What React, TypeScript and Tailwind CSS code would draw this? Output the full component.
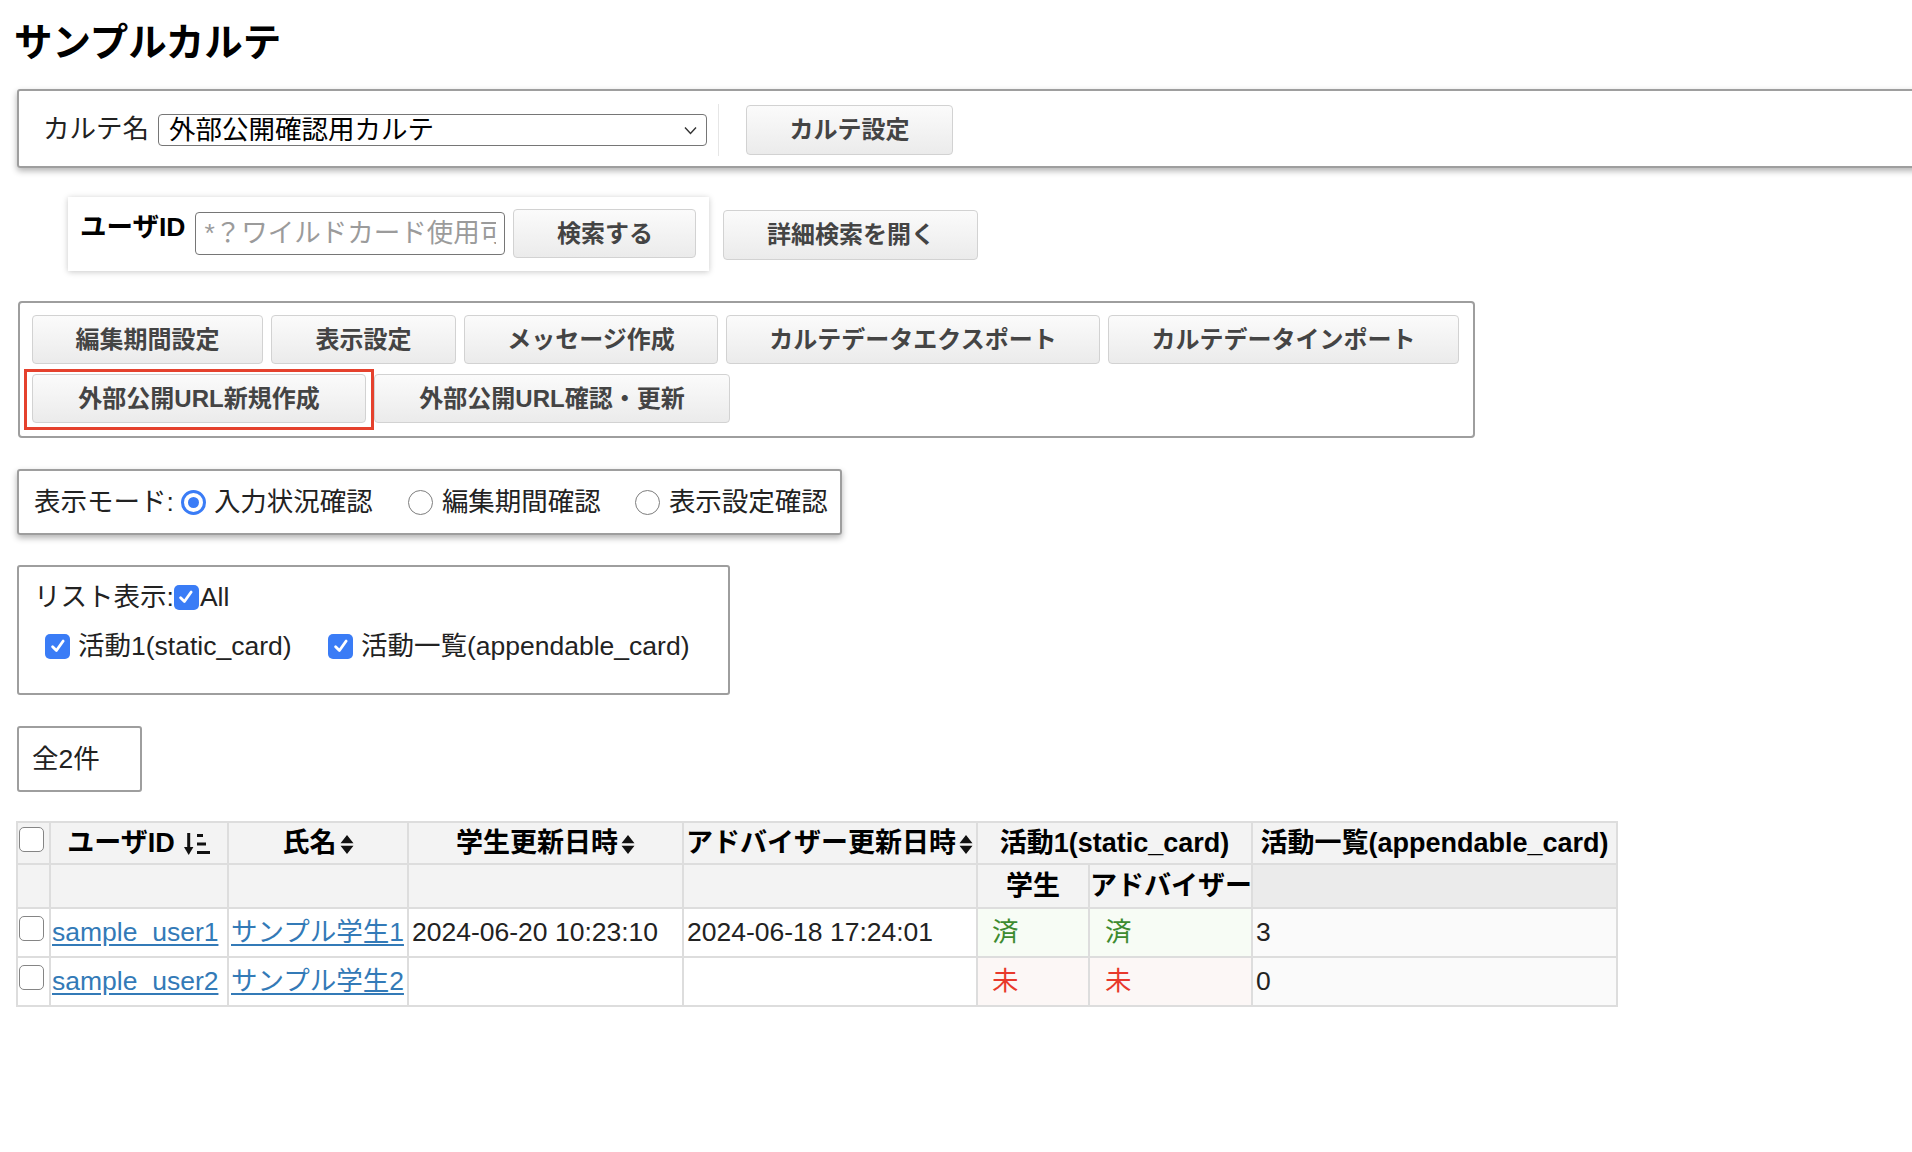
import React from 'react';

// shared border for table cells
const bd = 'border-2 border-[#dddddd]';

const Btn: React.FC<{ label: string; className?: string }> = ({ label, className = '' }) => (
  <button
    type="button"
    className={`shrink-0 rounded-[4px] border border-[#d2d2d2] bg-linear-to-b from-[#fbfbfb] to-[#ebebeb] text-[24px] font-bold leading-none whitespace-nowrap text-[#444] ${className}`}
  >
    {label}
  </button>
);

const CheckBox: React.FC<{ checked?: boolean; className?: string }> = ({ checked, className = '' }) =>
  checked ? (
    <span className={`flex h-[25px] w-[25px] shrink-0 items-center justify-center rounded-[5px] bg-[#3a7cf6] ${className}`}>
      <svg width="18" height="18" viewBox="0 0 16 16">
        <path d="M3.2 8.6 L6.6 12 L12.6 3.6" fill="none" stroke="#fff" strokeWidth="2.5" strokeLinecap="round" strokeLinejoin="round" />
      </svg>
    </span>
  ) : (
    <span className={`block h-[25px] w-[25px] shrink-0 rounded-[5px] border-[1.5px] border-[#858585] bg-white ${className}`} />
  );

const Radio: React.FC<{ checked?: boolean; className?: string }> = ({ checked, className = '' }) =>
  checked ? (
    <span className={`flex h-[25px] w-[25px] shrink-0 items-center justify-center rounded-full border-[3px] border-[#3a7cf6] bg-white ${className}`}>
      <span className="h-[11px] w-[11px] rounded-full bg-[#3a7cf6]" />
    </span>
  ) : (
    <span className={`block h-[25px] w-[25px] shrink-0 rounded-full border-[1.5px] border-[#7e7e7e] bg-white ${className}`} />
  );

// up/down sort marker
const SortBoth = () => (
  <svg width="14" height="21" viewBox="0 0 14 21" className="ml-[3px] inline-block align-[-3px]">
    <path d="M7 1 L13.5 9.3 H0.5 Z M7 20 L13.5 11.7 H0.5 Z" fill="#111" />
  </svg>
);

// sorted ascending marker
const SortAmount = () => (
  <svg width="27" height="24" viewBox="0 0 27 24" className="ml-[9px] inline-block align-[-4px]">
    <rect x="3.2" y="1" width="3" height="16" fill="#111" />
    <path d="M0 15 H9.4 L4.7 23 Z" fill="#111" />
    <rect x="13" y="2" width="6" height="3" fill="#111" />
    <rect x="13" y="10.5" width="9" height="3" fill="#111" />
    <rect x="13" y="19" width="13" height="3" fill="#111" />
  </svg>
);

export default function App() {
  return (
    <div className="min-h-screen w-full overflow-hidden bg-white pl-[17px] font-['Liberation_Sans','Noto_Sans_CJK_JP',sans-serif] text-[#222]">
      <h1 className="ml-[-3px] pt-[21px] text-[38.5px] font-bold leading-[44px] text-black">サンプルカルテ</h1>

      {/* カルテ選択 */}
      <div className="mt-[24px] flex h-[79px] w-[1920px] items-center rounded-[3px] border-2 border-[#9e9e9e] pl-[24px] pt-[2px] shadow-[0_3px_6px_rgba(0,0,0,0.3)]">
        <span className="text-[26.5px] leading-none">カルテ名</span>
        <div className="relative ml-[9px] h-[32px] w-[549px]">
          <select className="h-full w-full appearance-none rounded-[4px] border border-[#767676] bg-white pl-[10px] text-[26.5px] leading-[28px] text-black outline-none">
            <option>外部公開確認用カルテ</option>
          </select>
          <svg width="13" height="9" viewBox="0 0 13 9" className="pointer-events-none absolute right-[10px] top-[12px]">
            <path d="M1 1.5 L6.5 7.5 L12 1.5" fill="none" stroke="#333" strokeWidth="1.4" />
          </svg>
        </div>
        <div className="ml-[11px] h-[52px] w-px bg-[#e6e6e6]" />
        <Btn label="カルテ設定" className="ml-[27px] h-[50px] w-[207px]" />
      </div>

      {/* ユーザ検索 */}
      <div className="mt-[29px] flex items-start">
        <div className="ml-[51px] flex h-[74px] items-start bg-white pl-[12px] pr-[13px] pt-[12px] shadow-[0_1px_6px_rgba(0,0,0,0.22)]">
          <span className="mt-[3px] text-[26.5px] font-bold leading-[30px] text-black">ユーザID</span>
          <input
            className="ml-[10px] mt-[3px] h-[43px] w-[310px] rounded-[4px] border border-[#767676] px-[8px] text-[26.5px] outline-none placeholder:text-[#9b9b9b]"
            placeholder="*？ワイルドカード使用可能"
          />
          <Btn label="検索する" className="ml-[8px] h-[49px] w-[183px]" />
        </div>
        <Btn label="詳細検索を開く" className="ml-[14px] mt-[13px] h-[50px] w-[255px]" />
      </div>

      {/* 操作ボタン */}
      <div className="ml-[1px] mt-[30px] h-[137px] w-[1457px] rounded-[4px] border-2 border-[#9e9e9e] pl-[12px] pt-[12px]">
        <div className="flex gap-[8px]">
          <Btn label="編集期間設定" className="h-[49px] w-[231px]" />
          <Btn label="表示設定" className="h-[49px] w-[185px]" />
          <Btn label="メッセージ作成" className="h-[49px] w-[254px]" />
          <Btn label="カルテデータエクスポート" className="h-[49px] w-[374px]" />
          <Btn label="カルテデータインポート" className="h-[49px] w-[351px]" />
        </div>
        <div className="mt-[10px] flex gap-[8px]">
          <div className="relative">
            <Btn label="外部公開URL新規作成" className="h-[49px] w-[334px]" />
            <div className="pointer-events-none absolute -bottom-[7px] -left-[8px] -right-[8px] -top-[5px] border-[3px] border-[#e5412d]" />
          </div>
          <Btn label="外部公開URL確認・更新" className="h-[49px] w-[356px]" />
        </div>
      </div>

      {/* 表示モード */}
      <div className="mt-[31px] flex h-[66px] w-[825px] items-center rounded-[3px] border-2 border-[#9e9e9e] pl-[15px] text-[26.5px] leading-none shadow-[0_3px_6px_rgba(0,0,0,0.3)]">
        <span>表示モード:</span>
        <Radio checked className="ml-[7px]" />
        <span className="ml-[8px]">入力状況確認</span>
        <Radio className="ml-[35px]" />
        <span className="ml-[9px]">編集期間確認</span>
        <Radio className="ml-[34px]" />
        <span className="ml-[9px]">表示設定確認</span>
      </div>

      {/* リスト表示 */}
      <div className="mt-[30px] h-[130px] w-[713px] rounded-[3px] border-2 border-[#9e9e9e] pl-[15px] pt-[15px] text-[26.5px] leading-none">
        <div className="flex h-[30px] items-center">
          <span>リスト表示:</span>
          <CheckBox checked />
          <span className="ml-[1px]">All</span>
        </div>
        <div className="mt-[19px] flex h-[30px] items-center">
          <CheckBox checked className="ml-[11px]" />
          <span className="ml-[8px] w-[221px] whitespace-nowrap">活動1(static_card)</span>
          <CheckBox checked className="ml-[29px]" />
          <span className="ml-[8px] whitespace-nowrap">活動一覧(appendable_card)</span>
        </div>
      </div>

      {/* 件数 */}
      <div className="mt-[31px] flex h-[66px] w-[125px] items-center rounded-[3px] border-2 border-[#9e9e9e] pl-[13px] text-[26.5px] leading-none">
        全2件
      </div>

      {/* 一覧 */}
      <table className="ml-[-1px] mt-[29px] w-[1600px] table-fixed border-collapse leading-none">
        <colgroup>
          <col className="w-[33px]" />
          <col className="w-[178px]" />
          <col className="w-[180px]" />
          <col className="w-[275px]" />
          <col className="w-[294px]" />
          <col className="w-[112px]" />
          <col className="w-[163px]" />
          <col className="w-[365px]" />
        </colgroup>
        <thead>
          <tr className="h-[42px] bg-[#f3f3f3] text-[27px] font-bold text-black">
            <th className={`${bd} pl-[1px] pt-[4px] align-top`}>
              <CheckBox />
            </th>
            <th className={`${bd} whitespace-nowrap`}>
              ユーザID
              <SortAmount />
            </th>
            <th className={`${bd} whitespace-nowrap`}>
              氏名
              <SortBoth />
            </th>
            <th className={`${bd} whitespace-nowrap`}>
              学生更新日時
              <SortBoth />
            </th>
            <th className={`${bd} whitespace-nowrap pl-[2px] text-left`}>
              アドバイザー更新日時
              <SortBoth />
            </th>
            <th colSpan={2} className={`${bd} whitespace-nowrap`}>
              活動1(static_card)
            </th>
            <th className={`${bd} whitespace-nowrap`}>活動一覧(appendable_card)</th>
          </tr>
          <tr className="h-[44px] bg-[#f3f3f3] text-[27px] font-bold text-black">
            <th className={bd} />
            <th className={bd} />
            <th className={bd} />
            <th className={bd} />
            <th className={bd} />
            <th className={`${bd} whitespace-nowrap`}>学生</th>
            <th className={`${bd} whitespace-nowrap`}>アドバイザー</th>
            <th className={`${bd} bg-[#ebebeb]`} />
          </tr>
        </thead>
        <tbody className="text-[26.5px]">
          <tr className="h-[49px]">
            <td className={`${bd} pl-[1px] pt-[7px] align-top`}>
              <CheckBox />
            </td>
            <td className={`${bd} whitespace-nowrap pl-[1px]`}>
              <a href="#" className="text-[#337ab7] underline underline-offset-[3px]">sample_user1</a>
            </td>
            <td className={`${bd} whitespace-nowrap pl-[2px]`}>
              <a href="#" className="text-[#337ab7] underline underline-offset-[3px]">サンプル学生1</a>
            </td>
            <td className={`${bd} whitespace-nowrap pl-[3px]`}>2024-06-20 10:23:10</td>
            <td className={`${bd} whitespace-nowrap pl-[3px]`}>2024-06-18 17:24:01</td>
            <td className={`${bd} bg-[#f7fcf5] pl-[14px] text-[#3d8b2f]`}>済</td>
            <td className={`${bd} bg-[#f7fcf5] pl-[15px] text-[#3d8b2f]`}>済</td>
            <td className={`${bd} bg-[#fafafa] pl-[3px]`}>3</td>
          </tr>
          <tr className="h-[49px]">
            <td className={`${bd} pl-[1px] pt-[7px] align-top`}>
              <CheckBox />
            </td>
            <td className={`${bd} whitespace-nowrap pl-[1px]`}>
              <a href="#" className="text-[#337ab7] underline underline-offset-[3px]">sample_user2</a>
            </td>
            <td className={`${bd} whitespace-nowrap pl-[2px]`}>
              <a href="#" className="text-[#337ab7] underline underline-offset-[3px]">サンプル学生2</a>
            </td>
            <td className={bd} />
            <td className={bd} />
            <td className={`${bd} bg-[#fcf7f6] pl-[14px] text-[#e8392c]`}>未</td>
            <td className={`${bd} bg-[#fcf7f6] pl-[15px] text-[#e8392c]`}>未</td>
            <td className={`${bd} bg-[#fafafa] pl-[3px]`}>0</td>
          </tr>
        </tbody>
      </table>
    </div>
  );
}
